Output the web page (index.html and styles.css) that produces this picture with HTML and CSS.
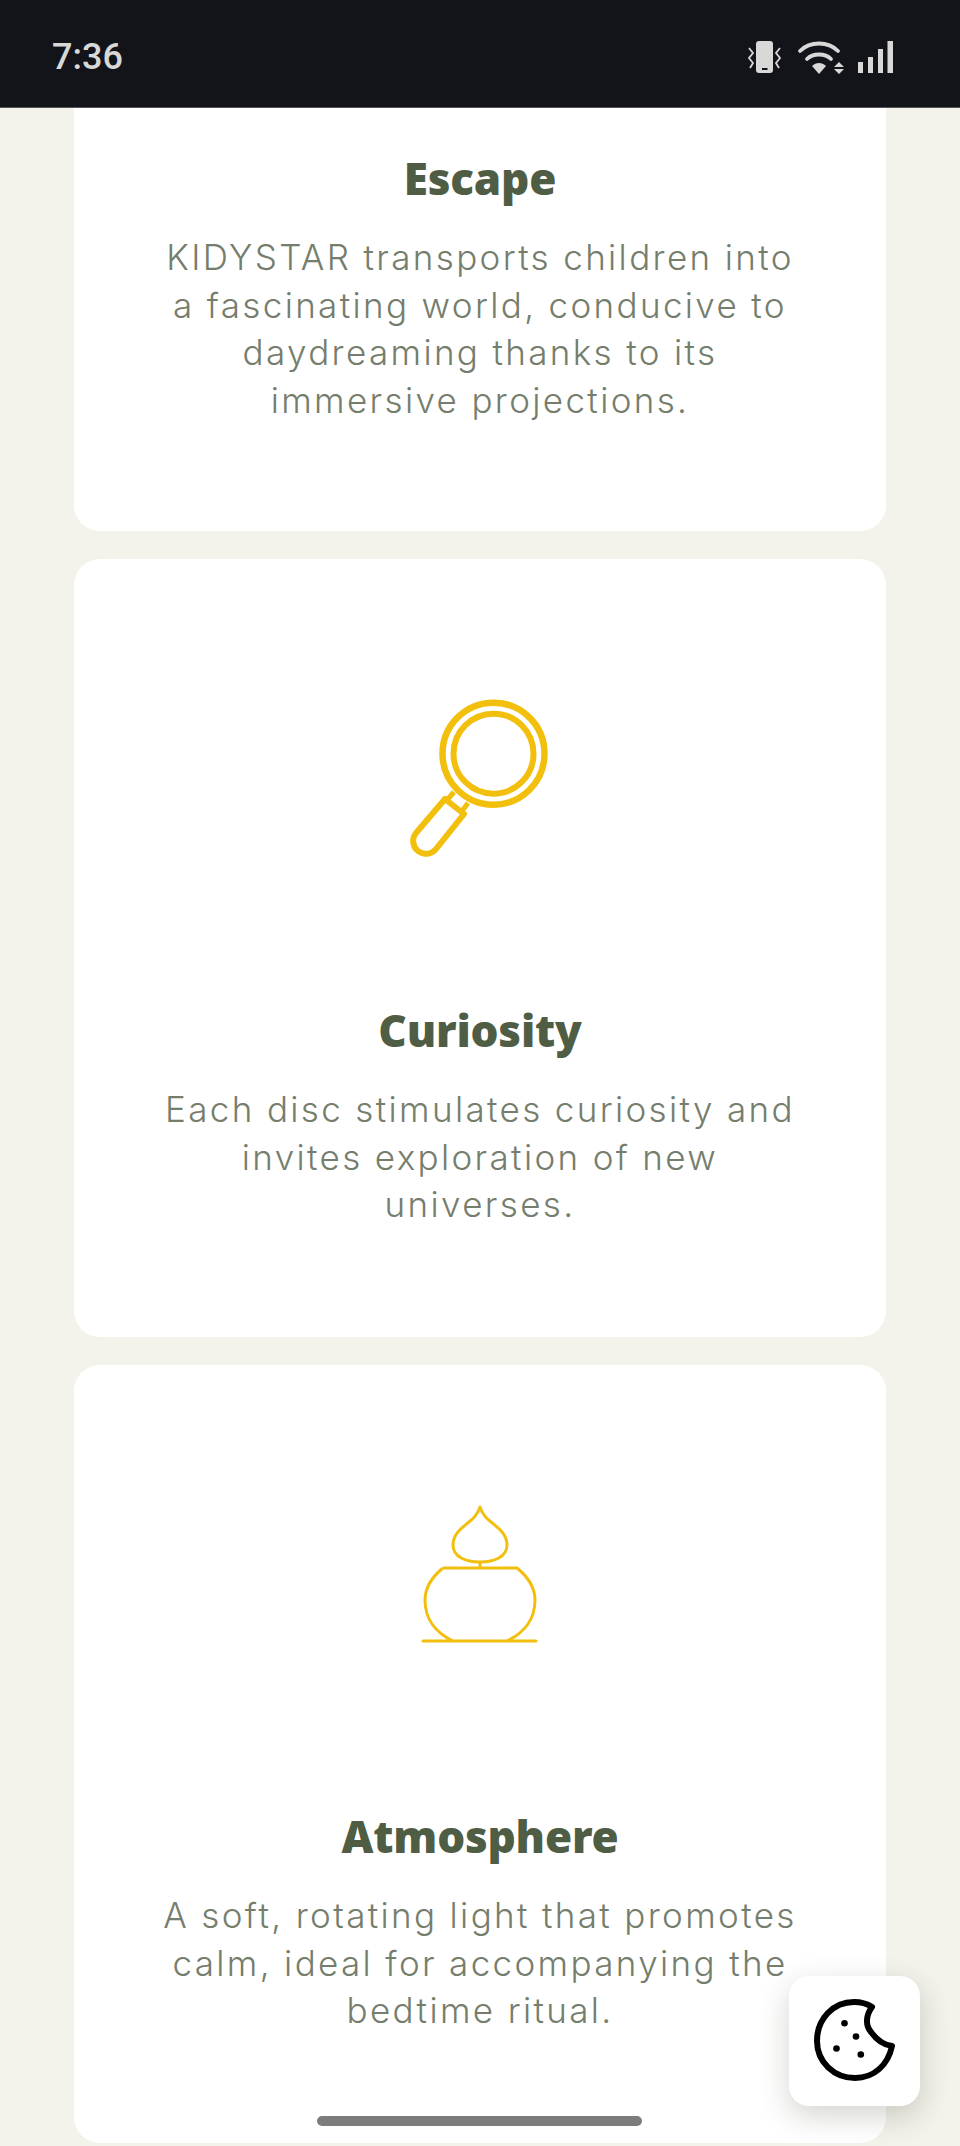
FILE: index.html
```html
<!DOCTYPE html>
<html lang="en">
  <head>
    <meta charset="UTF-8" />
    <title>KIDYSTAR</title>
    <link rel="stylesheet" href="styles.css">
  </head>
  <body>
    <div class="statusBar">
      <span class="clock">7:36</span>
      <div class="statusIcons">
        <svg width="36" height="34" viewBox="0 0 36 34" fill="none">
          <rect x="9" y="1" width="17" height="32" rx="3" fill="#d8d8d8" />
          <rect x="15" y="28" width="5.500" height="2" fill="#12141a" />
          <path d="M2 8 L6 13 L2 18 L6 23 L3 28" stroke="#d8d8d8" stroke-width="1.800" />
          <path d="M33 8 L29 13 L33 18 L29 23 L32 28" stroke="#d8d8d8" stroke-width="1.800" />
        </svg>
        <svg width="47" height="34" viewBox="0 0 47 34" fill="none">
          <path d="M3 11 C13 1 31 1 41 11" stroke="#d8d8d8" stroke-width="3.800" stroke-linecap="round" />
          <path d="M10 19 C16 13 28 13 34 19" stroke="#d8d8d8" stroke-width="3.800" stroke-linecap="round" />
          <path d="M15 26 C19 22 25 22 29 26 L22 34 Z" fill="#d8d8d8" />
          <path d="M42 22 L47 27 L37 27 Z M37 29 L47 29 L42 34 Z" fill="#d8d8d8" />
        </svg>
        <svg width="36" height="34" viewBox="0 0 36 34">
          <rect x="0" y="22" width="5" height="11" fill="#d8d8d8" />
          <rect x="10" y="17" width="5" height="16" fill="#d8d8d8" />
          <rect x="20" y="9" width="5" height="24" fill="#d8d8d8" />
          <rect x="29.500" y="1" width="5.500" height="32" fill="#d8d8d8" />
        </svg>
      </div>
    </div>

    <div class="cardList">
      <section class="card cardCut">
        <h2>Escape</h2>
        <p>KIDYSTAR transports children into<br />a fascinating world, conducive to<br />daydreaming thanks to its<br />immersive projections.</p>
      </section>

      <section class="card">
        <div class="cardIcon">
          <svg width="140" height="162" viewBox="0 0 140 162" fill="none" stroke="#f2bf0c">
            <circle cx="83.500" cy="54.700" r="51" stroke-width="6.500" />
            <circle cx="83.500" cy="54.700" r="40" stroke-width="6" />
            <path d="M44 93 L37 101 M58 104 L52 112" stroke-width="5" />
            <path d="M35 100 L54 115 L26 150 A12.500 12.500 0 0 1 6 134 Z" stroke-width="6" stroke-linejoin="round" />
          </svg>
        </div>
        <h2>Curiosity</h2>
        <p>Each disc stimulates curiosity and<br />invites exploration of new<br />universes.</p>
      </section>

      <section class="card">
        <div class="cardIcon">
          <svg width="120" height="140" viewBox="0 0 120 140" fill="none" stroke="#f2bf0c" stroke-width="3">
            <path d="M60 2 C64 18 87 22 87 40 C87 52 74 57 60 57 C46 57 33 52 33 40 C33 22 56 18 60 2 Z" stroke-linejoin="round" />
            <path d="M60 57 V63" />
            <path d="M23 63 H97 C108 72 115 83 115 95 C115 114 104 128 87 136 M23 63 C12 72 5 83 5 95 C5 114 16 128 33 136" />
            <path d="M3 136 H116" stroke-linecap="round" />
          </svg>
        </div>
        <h2>Atmosphere</h2>
        <p>A soft, rotating light that promotes<br />calm, ideal for accompanying the<br />bedtime ritual.</p>
      </section>
    </div>

    <button class="cookieButton" aria-label="Cookies">
      <svg width="84" height="84" viewBox="0 0 84 84" fill="none">
        <path d="M59 8 C53 4 47 3 41 3 C20 3 4 20 4 42 C4 63 21 79 42 79 C61 79 75 66 79 47 C71 46 63 40 58 33 C52 26 53 16 59 8 Z" stroke="#000" stroke-width="6" stroke-linejoin="round" />
        <circle cx="31.500" cy="24.200" r="3.300" fill="#000" />
        <circle cx="43" cy="37.500" r="3.300" fill="#000" />
        <circle cx="23.500" cy="49.500" r="3.300" fill="#000" />
        <circle cx="47.800" cy="55.500" r="3.300" fill="#000" />
      </svg>
    </button>
    <div class="homeBar"></div>
  </body>
</html>
```

FILE: styles.css
```css
html,
body {
  margin: 0;
  height: 2146px;
  overflow: hidden;
}

body {
  position: relative;
  background-color: #f3f2eb;
  font-family: Inter, "Liberation Sans", sans-serif;
}

.statusBar {
  height: 108px;
  background-color: #12141a;
  border-bottom: 1px solid #555;
  display: flex;
  justify-content: space-between;
  align-items: center;
  padding: 6px 66px 0 52px;
  box-sizing: border-box;
}

.clock {
  color: #d8d8d8;
  font-family: Roboto, sans-serif;
  font-size: 36px;
  font-weight: 500;
}

.statusIcons {
  display: flex;
  align-items: center;
  gap: 14px;
}

.cardList {
  display: flex;
  flex-direction: column;
  gap: 28px;
  margin: 0 74px;
}

.card {
  background-color: #fff;
  border-radius: 26px;
  height: 778px;
  box-sizing: border-box;
  text-align: center;
}

.cardCut {
  height: 423px;
  border-radius: 0 0 26px 26px;
  padding-top: 40px;
}

.cardIcon {
  height: 441px;
  display: flex;
  justify-content: center;
  align-items: flex-start;
  padding-top: 140px;
  box-sizing: border-box;
}

h2 {
  margin: 0;
  color: #4f5d45;
  font-family: "Noto Sans", sans-serif;
  font-size: 44px;
  font-weight: 900;
  line-height: 60px;
  letter-spacing: -0.200px;
}

p {
  margin: 26px 0 0;
  color: #757d6c;
  font-size: 35px;
  font-weight: 300;
  line-height: 47.500px;
  letter-spacing: 2.350px;
}

.cookieButton {
  position: absolute;
  left: 789px;
  top: 1976px;
  width: 131px;
  height: 130px;
  border: 0;
  border-radius: 20px;
  background-color: #fff;
  box-shadow: 0 10px 30px rgba(60, 60, 40, 0.22);
  display: flex;
  align-items: center;
  justify-content: center;
  padding: 0;
}

.homeBar {
  position: absolute;
  left: 317px;
  top: 2116px;
  width: 325px;
  height: 10px;
  border-radius: 5px;
  background-color: #7c7c7c;
}
```
